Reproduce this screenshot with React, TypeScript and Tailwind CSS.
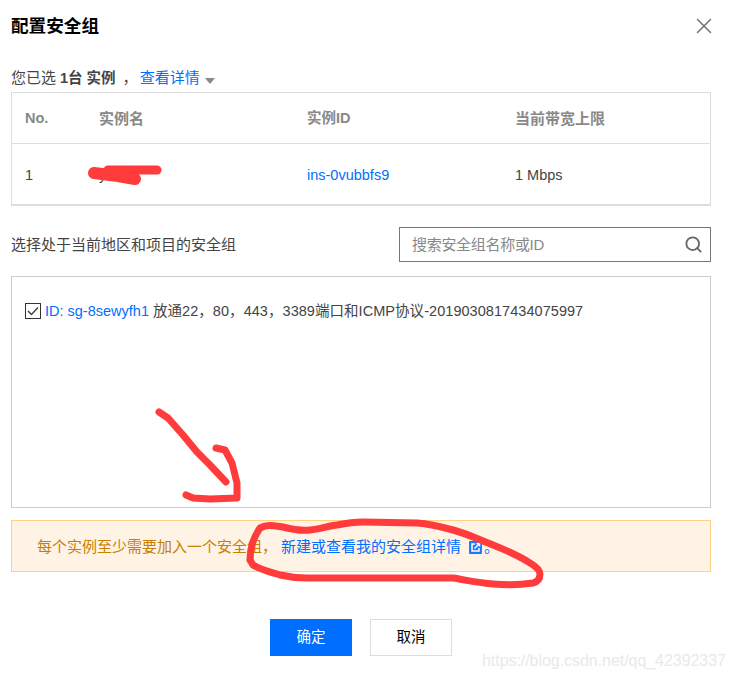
import { Search, X } from 'lucide-react';

const font = '[font-family:"Liberation_Sans","Noto_Sans_CJK_SC",sans-serif]';

function ExternalIcon() {
  return (
    <svg width="13" height="13" viewBox="0 0 13 13" className="block shrink-0">
      <rect width="13" height="13" rx="1" fill="#1a7bff" />
      <path d="M6 3H3v7h7V7" fill="none" stroke="#fff" strokeWidth="1.5" />
      <path d="M5.5 7.5L10 3M7.5 2.5h3v3" fill="none" stroke="#fff" strokeWidth="1.5" />
    </svg>
  );
}

function CheckMark() {
  return (
    <svg width="12" height="10" viewBox="0 0 12 10" fill="none" stroke="#444" strokeWidth="1.5">
      <path d="M1 5l3.5 3.5L11 1.5" />
    </svg>
  );
}

function Scribbles() {
  return (
    <svg width="735" height="677" viewBox="0 0 735 677" fill="none" stroke="#ff3b3b" strokeLinecap="round" strokeLinejoin="round" className="absolute left-0 top-0 pointer-events-none">
      {/* redacted instance name */}
      <path d="M108 170 L157 170" strokeWidth="9" />
      <path d="M94 173 L118 176 L135 179" strokeWidth="12" />
      {/* arrow */}
      <path d="M159 412 L168 418 L183 435 L197 452 L210 465 L226 482" strokeWidth="7" />
      <path d="M216 448 L225 450 L232 463 L237 483 L237 498 L210 499 L193 498 L186 495" strokeWidth="7" />
      {/* circle around the link */}
      <path d="M250 560 C250 548 253 538 260 528 C268 524 275 526 283 527 C295 530 303 531 310 530 C320 529 328 526 337 525 C347 523 355 522 363 522 L417 523 C430 524 442 527 453 530 C468 534 480 540 493 545 C508 551 520 556 530 563 C537 567 540 570 540 574 C540 579 537 582 533 583 C520 585 506 585 493 584 C479 583 466 580 453 578 L427 578 L373 578 L307 578 C298 578 289 577 280 575 C270 572 261 570 253 565 L250 560" strokeWidth="7" />
    </svg>
  );
}

export default function App() {
  return (
    <div className={`relative w-[735px] h-[677px] overflow-hidden bg-white pl-[11px] pr-[24px] text-[15px] text-[#444] ${font}`}>
      <div className="flex h-[52px] items-center justify-between">
        <h1 className="text-[17.6px] font-bold text-black">配置安全组</h1>
        <X size={26} strokeWidth={1.4} className="-mr-[6px] text-[#777]" />
      </div>

      <div className="flex h-[40px] items-end pb-[4px] leading-[20px]">
        <span>您已选</span>
        <span className="ml-1 text-[14.5px] font-bold">1台 实例</span>
        <span className="ml-[7px] mr-[2px]">，</span>
        <span className="text-[#006eff]">查看详情</span>
        <span className="mb-[4px] ml-[5px] h-0 w-0 border-x-[5px] border-t-[6px] border-x-transparent border-t-[#888]" />
      </div>

      <div className="h-[114px] border border-b-2 border-[#ddd] text-[14.5px]">
        <div className="grid h-[51px] grid-cols-[74px_208px_208px_1fr] items-center border-b border-[#ddd] px-[13px] pt-[2px] font-bold text-[#888]">
          <span>No.</span>
          <span className="text-[15px]">实例名</span>
          <span>实例ID</span>
          <span className="text-[15px]">当前带宽上限</span>
        </div>
        <div className="grid h-[60px] grid-cols-[74px_208px_208px_1fr] items-center px-[13px] pt-[4px]">
          <span>1</span>
          <span>y</span>
          <span className="text-[#006eff]">ins-0vubbfs9</span>
          <span>1 Mbps</span>
        </div>
      </div>

      <div className="mt-[21px] flex h-[35px] items-center justify-between">
        <span className="pt-[2px]">选择处于当前地区和项目的安全组</span>
        <div className="flex h-[35px] w-[312px] items-center justify-between border border-[#777] pl-[12px] pr-[7px] text-[#888]">
          <span className="pt-[2px] tracking-[-0.3px]">搜索安全组名称或ID</span>
          <Search size={19} strokeWidth={2.3} className="text-[#666]" />
        </div>
      </div>

      <div className="mt-[14px] h-[232px] border border-[#ccc] px-[13px] pt-[24px]">
        <div className="flex items-center text-[14.5px] leading-[20px]">
          <span className="mr-[4px] flex h-[16px] w-[16px] items-center justify-center border border-[#333]">
            <CheckMark />
          </span>
          <span className="text-[#006eff]">ID: sg-8sewyfh1</span>
          <span className="ml-[4px] tracking-[0.05px]">放通22，80，443，3389端口和ICMP协议-2019030817434075997</span>
        </div>
      </div>

      <div className="mt-[12px] flex h-[52px] items-center border border-[#ffd180] bg-[#fff3e6] pl-[25px] pt-[3px] text-[#c77f00]">
        <span>每个实例至少需要加入一个安全组，</span>
        <span className="ml-[4px] text-[#006eff]">新建或查看我的安全组详情</span>
        <span className="ml-[8px]"><ExternalIcon /></span>
        <span className="ml-[2px] text-[#006eff]">。</span>
      </div>

      <div className="mt-[47px] flex justify-center gap-[18px]">
        <button className="h-[37px] w-[82px] bg-[#006eff] text-[14.5px] text-white">确定</button>
        <button className="h-[37px] w-[82px] border border-[#ddd] bg-white text-[14.5px] text-black">取消</button>
      </div>

      <Scribbles />
      <span className="absolute left-[482px] top-[649px] text-[16px] tracking-[-0.05px] text-[#e9e9e9]">https://blog.csdn.net/qq_42392337</span>
    </div>
  );
}
